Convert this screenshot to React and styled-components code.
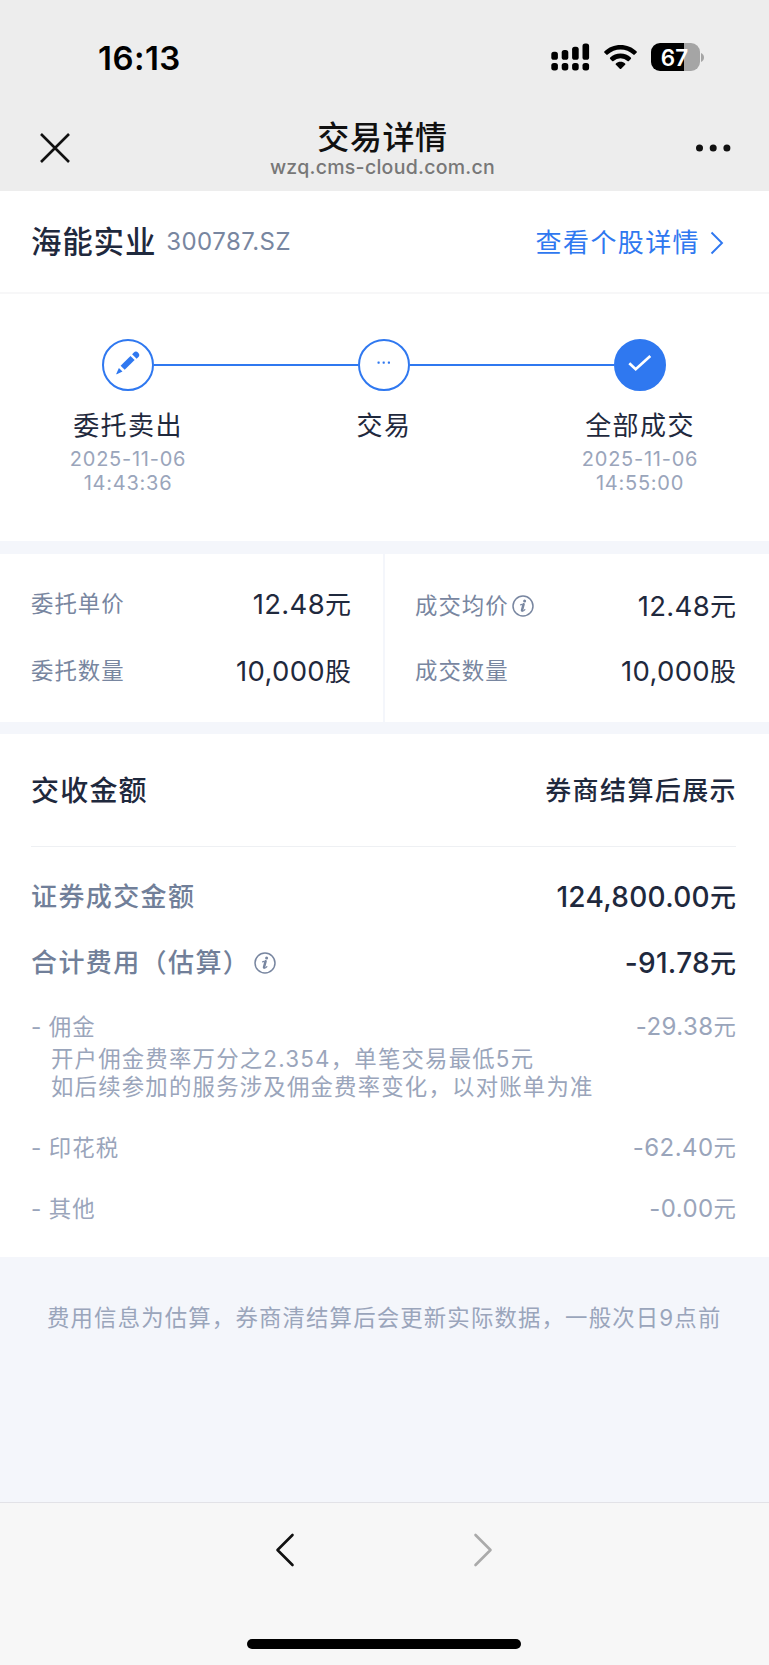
import React from 'react';
import styled, { createGlobalStyle } from 'styled-components';

const ink = '#1f293d';
const slate = '#7886a0';
const mist = '#9aa5bb';
const blue = '#2f78f0';
const wash = '#f4f6fb';

const GlobalStyle = createGlobalStyle`
  * { box-sizing: border-box; }
  body {
    margin: 0;
    background: ${wash};
    font-family: Inter, "Noto Sans CJK SC", sans-serif;
    color: ${ink};
    -webkit-font-smoothing: antialiased;
  }
`;

const Screen = styled.div`
  width: 769px;
  height: 1665px;
  display: flex;
  flex-direction: column;
  overflow: hidden;
`;

const Header = styled.header`
  height: 191px;
  background: #ededed;
  display: flex;
  flex-direction: column;
`;

const StatusBar = styled.div`
  height: 114px;
  padding: 0 65px 0 98px;
  display: flex;
  align-items: center;
  justify-content: space-between;
`;

const Clock = styled.span`
  padding-top: 2px;
  font-size: 33px;
  font-weight: 600;
  letter-spacing: 0.45px;
  line-height: 40px;
  color: #000;
`;

const StatusIcons = styled.div`
  display: flex;
  align-items: center;
`;

const Signal = styled.svg`
  margin-right: 14px;
`;

const Wifi = styled.svg`
  margin-right: 14px;
`;

const Battery = styled.div`
  width: 49px;
  height: 28px;
  padding-right: 1px;
  border-radius: 9px;
  background: linear-gradient(to right, #000 67%, #a5a5a5 67%);
  color: #fff;
  font-size: 22.5px;
  font-weight: 600;
  line-height: 29px;
  text-align: center;
`;

const BatteryCap = styled.svg`
  margin-left: 1.5px;
`;

const NavBar = styled.div`
  height: 77px;
  padding: 0 38px 0 40px;
  display: grid;
  grid-template-columns: 36px 1fr 36px;
  align-items: start;
`;

const NavIcon = styled.svg`
  display: block;
  margin-top: 19px;
`;

const NavTitle = styled.div`
  margin-right: 6px;
  display: flex;
  flex-direction: column;
  align-items: center;
`;

const PageTitle = styled.h1`
  margin: 4px 0 -1px;
  font-size: 32px;
  font-weight: 500;
  letter-spacing: 0.6px;
  line-height: 40px;
  color: #111;
`;

const PageUrl = styled.span`
  font-size: 19.5px;
  font-weight: 500;
  letter-spacing: 0.27px;
  line-height: 20px;
  color: #777;
`;

const StockBar = styled.section`
  height: 103px;
  padding: 0 45px 0 31px;
  background: #fff;
  border-bottom: 2px solid #f7f7f8;
  display: flex;
  align-items: center;
  justify-content: space-between;
`;

const StockIdentity = styled.div`
  display: flex;
  align-items: center;
  gap: 10px;
`;

const StockName = styled.h2`
  margin: 0;
  font-size: 30.5px;
  font-weight: 500;
  letter-spacing: 0.8px;
  line-height: 44px;
`;

const StockCode = styled.span`
  font-size: 24px;
  letter-spacing: 0.45px;
  line-height: 44px;
  color: ${slate};
`;

const DetailLink = styled.a`
  padding-top: 2px;
  display: flex;
  align-items: center;
  gap: 10px;
  font-size: 26px;
  letter-spacing: 1.4px;
  line-height: 44px;
  color: ${blue};
`;

const Steps = styled.section`
  height: 247px;
  padding: 45px 1px 0 0;
  background: #fff;
  display: grid;
  grid-template-columns: repeat(3, 1fr);
`;

const Step = styled.div`
  display: flex;
  flex-direction: column;
  align-items: center;
`;

const StepTrack = styled.div`
  align-self: stretch;
  display: flex;
  align-items: center;
`;

const StepLine = styled.span`
  flex: 1;
  height: 2px;
  background: ${({ $hidden }) => ($hidden ? 'transparent' : blue)};
`;

const StepBadge = styled.span`
  width: 52px;
  height: 52px;
  border: 2px solid ${blue};
  border-radius: 50%;
  background: ${({ $done }) => ($done ? blue : '#fff')};
  display: flex;
  align-items: center;
  justify-content: center;
`;

const StepLabel = styled.span`
  margin-top: 15px;
  font-size: 26px;
  letter-spacing: 1.4px;
  line-height: 40px;
`;

const StepTime = styled.time`
  margin-top: 2px;
  width: 140px;
  font-size: 20px;
  letter-spacing: 0.75px;
  line-height: 23.5px;
  text-align: center;
  color: ${mist};
`;

const OrderInfo = styled.section`
  height: 168px;
  margin: 13px 0 12px;
  background: #fff;
  display: grid;
  grid-template-columns: 385px 1fr;
`;

const InfoColumn = styled.div`
  padding: ${({ $divided }) => ($divided ? '30px 32px 0 31px' : '30px 33px 0 30px')};
  border-right: ${({ $divided }) => ($divided ? `2px solid ${wash}` : 'none')};
`;

const InfoRow = styled.div`
  height: 40px;
  margin-top: ${({ $offset }) => $offset || 0}px;
  display: flex;
  align-items: center;
  justify-content: space-between;
`;

const InfoLabel = styled.span`
  display: flex;
  align-items: center;
  gap: 3px;
  font-size: 22.4px;
  letter-spacing: 1px;
  line-height: 40px;
  color: ${slate};
`;

const Amount = styled.span`
  font-size: ${({ $strong }) => ($strong ? 28 : 27.5)}px;
  font-weight: ${({ $strong }) => ($strong ? 500 : 400)};
  letter-spacing: 0.3px;
  line-height: 40px;
`;

const Unit = styled.span`
  font-size: 26px;
  letter-spacing: 0;
`;

const Settlement = styled.section`
  height: 523px;
  padding: 0 33px 0 31px;
  background: #fff;
`;

const SettlementHead = styled.div`
  height: 113px;
  padding-top: 2px;
  border-bottom: 1px solid #eef0f3;
  display: flex;
  align-items: center;
  justify-content: space-between;
`;

const SettlementTitle = styled.h3`
  margin: 0;
  font-size: 28px;
  font-weight: 500;
  letter-spacing: 1.2px;
  line-height: 40px;
`;

const SettlementStatus = styled.span`
  margin-right: -1px;
  font-size: 26px;
  font-weight: 500;
  letter-spacing: 1.4px;
  line-height: 40px;
`;

const TotalRow = styled.div`
  height: 40px;
  margin-top: ${({ $offset }) => $offset}px;
  display: flex;
  align-items: center;
  justify-content: space-between;
`;

const TotalLabel = styled.span`
  display: flex;
  align-items: center;
  gap: 4px;
  font-size: 26px;
  font-weight: 500;
  letter-spacing: 1.4px;
  line-height: 42px;
  color: #717f99;
`;

const FeeRow = styled.div`
  height: 32px;
  margin-top: ${({ $offset }) => $offset}px;
  display: flex;
  align-items: center;
  justify-content: space-between;
  font-size: 22.4px;
  line-height: 32px;
  color: ${mist};
`;

const FeeLabel = styled.span`
  letter-spacing: 1.1px;
  word-spacing: -1px;
`;

const FeeAmount = styled.span`
  font-size: 24px;
  letter-spacing: 0.45px;
`;

const FeeUnit = styled.span`
  font-size: 22.4px;
  letter-spacing: 0;
`;

const FeeNote = styled.p`
  margin: 2px 0 0 20px;
  font-size: 22.4px;
  letter-spacing: 1.2px;
  line-height: 27.5px;
  white-space: nowrap;
  color: ${mist};
`;

const Notice = styled.p`
  flex: 1;
  margin: 0;
  padding: 41px 0 0 47px;
  font-size: 22.4px;
  letter-spacing: 1.16px;
  line-height: 40px;
  white-space: nowrap;
  color: ${mist};
`;

const BrowserBar = styled.footer`
  height: 163px;
  padding-right: 1px;
  background: #f7f7f7;
  border-top: 1px solid #e2e2e7;
  display: flex;
  flex-direction: column;
  align-items: center;
`;

const BrowserButtons = styled.nav`
  height: 136px;
  padding-top: 29px;
  display: flex;
  gap: 178px;
`;

const HomeIndicator = styled.div`
  width: 274px;
  height: 10px;
  border-radius: 5px;
  background: #000;
`;

const StepGlyph = styled.svg`
  display: block;
  overflow: visible;
`;

const InfoIcon = () => (
  <svg width="22" height="22" viewBox="0 0 22 22" fill="none">
    <circle cx="11" cy="11" r="10" stroke={slate} strokeWidth="1.5" />
    <circle cx="12.6" cy="5.9" r="1.5" fill={slate} />
    <path d="M8.600 9.900l1.500-.5" stroke={slate} strokeWidth="1.300" strokeLinecap="round" />
    <path d="M11.600 9.200L10 15.200" stroke={slate} strokeWidth="2.500" strokeLinecap="round" />
    <path d="M10 16.200c1.100.2 2-.4 2.900-1.500" stroke={slate} strokeWidth="1.200" strokeLinecap="round" />
  </svg>
);

const PencilIcon = () => (
  <StepGlyph width="24" height="24" viewBox="0 0 24 24" fill={blue}>
    <path d="M14.500 2.900L18.600 6.900L8.700 16.800L4.600 12.700z" />
    <path d="M15.900 1.500l1.500-1.500a3.200 3.200 0 0 1 4.600 0 3.200 3.200 0 0 1 0 4.500l-1.600 1.500z" transform="translate(.2 -.3)" />
    <path d="M2.900 14.900L6.500 18.500L.8 21.300C.4 21.500.1 21.200.3 20.800z" />
  </StepGlyph>
);

const DotsIcon = () => (
  <StepGlyph width="16" height="8" viewBox="0 0 16 8" fill={blue}>
    <rect x="1.5" y="0.500" width="2.2" height="2.2" rx=".6" />
    <rect x="6.6" y="0.500" width="2.2" height="2.2" rx=".6" />
    <rect x="11.8" y="0.500" width="2.2" height="2.2" rx=".6" />
  </StepGlyph>
);

const CheckIcon = () => (
  <StepGlyph width="24" height="20" viewBox="0 0 24 20" fill="none">
    <path d="M1.300 8.200l6.400 6L22.300 1" stroke="#fff" strokeWidth="2.700" />
  </StepGlyph>
);

const orders = [
  [
    { label: '委托单价', value: '12.48', unit: '元' },
    { label: '委托数量', value: '10,000', unit: '股' },
  ],
  [
    { label: '成交均价', value: '12.48', unit: '元', info: true },
    { label: '成交数量', value: '10,000', unit: '股' },
  ],
];
const rowOffsets = [[0, 27], [2, 25]];

const steps = [
  { label: '委托卖出', day: '2025-11-06', time: '14:43:36', icon: <PencilIcon /> },
  { label: '交易', icon: <DotsIcon /> },
  { label: '全部成交', day: '2025-11-06', time: '14:55:00', icon: <CheckIcon />, done: true },
];

export default function App() {
  return (
    <Screen>
      <GlobalStyle />
      <Header>
        <StatusBar>
          <Clock>16:13</Clock>
          <StatusIcons>
            <Signal width="39" height="28" viewBox="0 0 39 28">
              <rect x="0.3" y="8.8" width="6.600" height="8" rx="2.6" />
              <rect x="10.7" y="6.9" width="6.600" height="9.9" rx="2.6" />
              <rect x="21.1" y="3.7" width="6.600" height="13.1" rx="2.6" />
              <rect x="31.5" y="0.5" width="6.600" height="16.3" rx="2.6" />
              {[0.3, 10.7, 21.1, 31.5].map((x) => (
                <rect key={x} x={x} y="20" width="6.600" height="7.4" rx="2.6" />
              ))}
            </Signal>
            <Wifi width="33" height="25" viewBox="0 0 33 25">
              <path d="M16.5 0C10.2 0 4.500 2.400 .5 6.300c-.5.500-.5 1 0 1.500l1.800 1.800c.4.400 1 .4 1.400 0a18.400 18.400 0 0 1 25.600 0c.4.400 1 .4 1.400 0l1.800-1.800c.5-.5.5-1 0-1.500C28.500 2.400 22.800 0 16.500 0z" />
              <path d="M16.500 8.500c-4 0-7.600 1.500-10.300 4-.5.500-.5 1 0 1.500l1.900 1.900c.4.400.9.400 1.400 0a10.300 10.300 0 0 1 14 0c.5.400 1 .4 1.400 0l1.900-1.900c.5-.5.5-1 0-1.500-2.700-2.500-6.300-4-10.300-4z" />
              <path d="M16.500 16.700c-1.800 0-3.400.6-4.600 1.700-.5.500-.5.900 0 1.400l3.900 3.900c.4.400 1 .4 1.400 0l3.900-3.900c.5-.5.500-.9 0-1.400-1.200-1.100-2.800-1.700-4.600-1.700z" />
            </Wifi>
            <Battery>67</Battery>
            <BatteryCap width="3" height="9" viewBox="0 0 3 9">
              <path d="M0 0c1.800.8 3 2.500 3 4.500S1.800 8.200 0 9z" fill="#a5a5a5" />
            </BatteryCap>
          </StatusIcons>
        </StatusBar>
        <NavBar>
          <NavIcon width="30" height="30" viewBox="0 0 30 30" fill="none">
            <path d="M1 1L29 29M29 1L1 29" stroke="#111" strokeWidth="2.600" />
          </NavIcon>
          <NavTitle>
            <PageTitle>交易详情</PageTitle>
            <PageUrl>wzq.cms-cloud.com.cn</PageUrl>
          </NavTitle>
          <NavIcon width="36" height="30" viewBox="0 0 36 30" fill="#111">
            <circle cx="4.5" cy="15" r="3.500" />
            <circle cx="18.200" cy="15" r="3.500" />
            <circle cx="31.900" cy="15" r="3.500" />
          </NavIcon>
        </NavBar>
      </Header>

      <StockBar>
        <StockIdentity>
          <StockName>海能实业</StockName>
          <StockCode>300787.SZ</StockCode>
        </StockIdentity>
        <DetailLink>
          查看个股详情
          <svg width="14" height="24" viewBox="0 0 14 24" fill="none">
            <path d="M1.500 1.500L12 12L1.500 22.500" stroke={blue} strokeWidth="1.900" />
          </svg>
        </DetailLink>
      </StockBar>

      <Steps>
        {steps.map((step, i) => (
          <Step key={step.label}>
            <StepTrack>
              <StepLine $hidden={i === 0} />
              <StepBadge $done={step.done}>{step.icon}</StepBadge>
              <StepLine $hidden={i === steps.length - 1} />
            </StepTrack>
            <StepLabel>{step.label}</StepLabel>
            {step.day && (
              <StepTime>
                {step.day}
                <br />
                {step.time}
              </StepTime>
            )}
          </Step>
        ))}
      </Steps>

      <OrderInfo>
        {orders.map((rows, c) => (
          <InfoColumn key={c} $divided={c === 0}>
            {rows.map((row, r) => (
              <InfoRow key={row.label} $offset={rowOffsets[c][r]}>
                <InfoLabel>
                  {row.label}
                  {row.info && <InfoIcon />}
                </InfoLabel>
                <Amount>
                  {row.value}
                  <Unit>{row.unit}</Unit>
                </Amount>
              </InfoRow>
            ))}
          </InfoColumn>
        ))}
      </OrderInfo>

      <Settlement>
        <SettlementHead>
          <SettlementTitle>交收金额</SettlementTitle>
          <SettlementStatus>券商结算后展示</SettlementStatus>
        </SettlementHead>
        <TotalRow $offset={30}>
          <TotalLabel>证券成交金额</TotalLabel>
          <Amount $strong>
            124,800.00<Unit>元</Unit>
          </Amount>
        </TotalRow>
        <TotalRow $offset={26}>
          <TotalLabel>
            合计费用（估算）
            <InfoIcon />
          </TotalLabel>
          <Amount $strong>
            -91.78<Unit>元</Unit>
          </Amount>
        </TotalRow>
        <FeeRow $offset={28}>
          <FeeLabel>- 佣金</FeeLabel>
          <FeeAmount>
            -29.38<FeeUnit>元</FeeUnit>
          </FeeAmount>
        </FeeRow>
        <FeeNote>
          开户佣金费率万分之2.354，单笔交易最低5元
          <br />
          如后续参加的服务涉及佣金费率变化，以对账单为准
        </FeeNote>
        <FeeRow $offset={32}>
          <FeeLabel>- 印花税</FeeLabel>
          <FeeAmount>
            -62.40<FeeUnit>元</FeeUnit>
          </FeeAmount>
        </FeeRow>
        <FeeRow $offset={29}>
          <FeeLabel>- 其他</FeeLabel>
          <FeeAmount>
            -0.00<FeeUnit>元</FeeUnit>
          </FeeAmount>
        </FeeRow>
      </Settlement>

      <Notice>费用信息为估算，券商清结算后会更新实际数据，一般次日9点前</Notice>

      <BrowserBar>
        <BrowserButtons>
          <svg width="20" height="36" viewBox="0 0 20 36" fill="none">
            <path d="M17.500 3L2.500 18L17.500 33" stroke="#111" strokeWidth="2.600" strokeLinecap="round" strokeLinejoin="round" />
          </svg>
          <svg width="20" height="36" viewBox="0 0 20 36" fill="none">
            <path d="M2.500 3L17.500 18L2.500 33" stroke="#aaa" strokeWidth="2.600" strokeLinecap="round" strokeLinejoin="round" />
          </svg>
        </BrowserButtons>
        <HomeIndicator />
      </BrowserBar>
    </Screen>
  );
}
